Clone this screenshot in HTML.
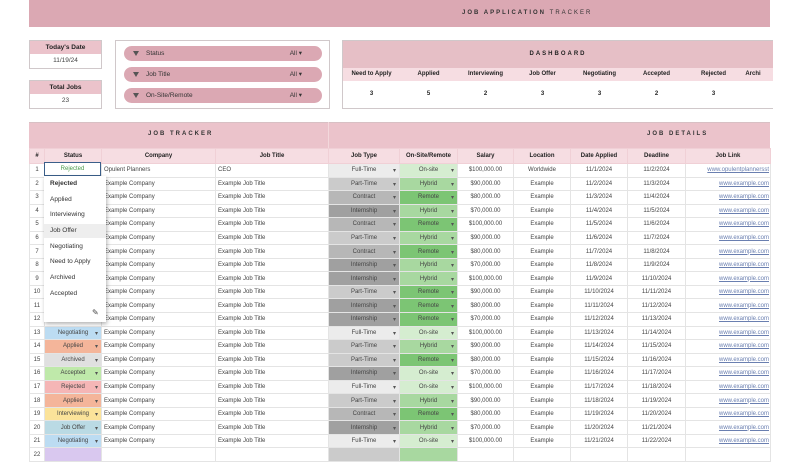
<!DOCTYPE html>
<html><head><style>
body{margin:0;width:800px;height:450px;overflow:hidden;background:#fff;font-family:"Liberation Sans",sans-serif;position:relative}
.a{position:absolute}
.box{border:1px solid #d0c8ca;background:#fff}
.ph{background:#ebc3cb;font-weight:bold;font-size:6.5px;text-align:center;color:#222}
.pill{position:absolute;left:8px;width:198px;height:15px;border-radius:8px;background:#dba8b3;font-size:6.5px;color:#333;line-height:15px}
.pill b{font-weight:normal;position:absolute;left:22px}
.pill i{font-style:normal;position:absolute;right:20px}
.pill s{position:absolute;left:9px;top:5px;width:0;height:0;border-left:3.5px solid transparent;border-right:3.5px solid transparent;border-top:5px solid #555;text-decoration:none}
table{border-collapse:collapse;table-layout:fixed;position:absolute;left:29px;top:148px;font-size:6px;color:#444}
td{height:12.55px;padding:0;border:1px solid #e4e4e4;text-align:center;white-space:nowrap;overflow:hidden;position:relative}
th{height:12px;background:#f6dde2;font-size:6px;color:#222;border:1px solid #f0d0d6}
td.l{text-align:left;padding-left:2px}
.dd::after{content:"▾";position:absolute;right:3px;font-size:6px;color:#555}
.ft{background:#ececec}.pt{background:#cbcbcb}.ct{background:#b7b7b7}.in{background:#a0a0a0}
.os{background:#d5edd0}.hy{background:#a8d8a0}.re{background:#7cc574}
.lk{color:#6a7fb0;text-decoration:underline;text-align:right;padding-right:1px}
</style></head><body>
<div class="a" style="left:29px;top:0;width:741px;height:27px;background:#dba8b3"></div>
<div class="a" style="left:462px;top:10px;font-size:6px;font-weight:bold;letter-spacing:2px;color:#333">JOB APPLICATION <span style="font-weight:normal">TRACKER</span></div>

<div class="a box" style="left:29px;top:40px;width:71px;height:27px"><div class="ph" style="height:13px;line-height:13px">Today's Date</div><div style="font-size:6.5px;text-align:center;line-height:13px;color:#444">11/19/24</div></div>
<div class="a box" style="left:29px;top:80px;width:71px;height:27px"><div class="ph" style="height:13px;line-height:13px">Total Jobs</div><div style="font-size:6.5px;text-align:center;line-height:13px;color:#444">23</div></div>

<div class="a box" style="left:115px;top:40px;width:213px;height:67px">
<div class="pill" style="top:5px"><s></s><b>Status</b><i>All ▾</i></div>
<div class="pill" style="top:26px"><s></s><b>Job Title</b><i>All ▾</i></div>
<div class="pill" style="top:47px"><s></s><b>On-Site/Remote</b><i>All ▾</i></div>
</div>

<div class="a box" style="left:342px;top:40px;width:430px;height:67px;border-right:none">
<div class="ph" style="height:27px;line-height:27px;letter-spacing:2px;font-size:6px;background:#e6bfc6">DASHBOARD</div>
<div style="display:flex;background:#f6dde2;height:13px;line-height:13px;font-size:6px;font-weight:bold;color:#222">
<div style="width:57px;text-align:center">Need to Apply</div><div style="width:57px;text-align:center">Applied</div><div style="width:57px;text-align:center">Interviewing</div><div style="width:57px;text-align:center">Job Offer</div><div style="width:57px;text-align:center">Negotiating</div><div style="width:57px;text-align:center">Accepted</div><div style="width:57px;text-align:center">Rejected</div><div style="width:31px;overflow:hidden">&nbsp;&nbsp;Archi</div></div>
<div style="display:flex;height:26px;line-height:26px;font-size:6px;font-weight:bold;color:#222">
<div style="width:57px;text-align:center">3</div><div style="width:57px;text-align:center">5</div><div style="width:57px;text-align:center">2</div><div style="width:57px;text-align:center">3</div><div style="width:57px;text-align:center">3</div><div style="width:57px;text-align:center">2</div><div style="width:57px;text-align:center">3</div></div>
</div>

<div class="a" style="left:29px;top:122px;width:741px;height:26px;background:#ebc3cb;border-top:1px solid #d8c0c4"></div>
<div class="a" style="left:328px;top:122px;width:1px;height:26px;background:#f3d8dc"></div>
<div class="a" style="left:148px;top:131px;font-size:6px;font-weight:bold;letter-spacing:2px;color:#333">JOB TRACKER</div>
<div class="a" style="left:647px;top:131px;font-size:6px;font-weight:bold;letter-spacing:2px;color:#333">JOB DETAILS</div>

<table>
<colgroup><col style="width:15px"><col style="width:57px"><col style="width:114px"><col style="width:113px"><col style="width:71px"><col style="width:58px"><col style="width:56px"><col style="width:57px"><col style="width:57px"><col style="width:58px"><col style="width:85px"></colgroup>
<tr><th>#</th><th>Status</th><th>Company</th><th>Job Title</th><th>Job Type</th><th>On-Site/Remote</th><th>Salary</th><th>Location</th><th>Date Applied</th><th>Deadline</th><th>Job Link</th></tr>
<tr><td>1</td><td style="color:#4a9a4a">Rejected</td><td class="l">Opulent Planners</td><td class="l">CEO</td><td class="ft dd">Full-Time</td><td class="os dd">On-site</td><td>$100,000.00</td><td>Worldwide</td><td>11/1/2024</td><td>11/2/2024</td><td class="lk">www.opulentplannersst</td></tr>
<tr><td>2</td><td></td><td class="l">Example Company</td><td class="l">Example Job Title</td><td class="pt dd">Part-Time</td><td class="hy dd">Hybrid</td><td>$90,000.00</td><td>Example</td><td>11/2/2024</td><td>11/3/2024</td><td class="lk">www.example.com</td></tr>
<tr><td>3</td><td></td><td class="l">Example Company</td><td class="l">Example Job Title</td><td class="ct dd">Contract</td><td class="re dd">Remote</td><td>$80,000.00</td><td>Example</td><td>11/3/2024</td><td>11/4/2024</td><td class="lk">www.example.com</td></tr>
<tr><td>4</td><td></td><td class="l">Example Company</td><td class="l">Example Job Title</td><td class="in dd">Internship</td><td class="hy dd">Hybrid</td><td>$70,000.00</td><td>Example</td><td>11/4/2024</td><td>11/5/2024</td><td class="lk">www.example.com</td></tr>
<tr><td>5</td><td></td><td class="l">Example Company</td><td class="l">Example Job Title</td><td class="ct dd">Contract</td><td class="re dd">Remote</td><td>$100,000.00</td><td>Example</td><td>11/5/2024</td><td>11/6/2024</td><td class="lk">www.example.com</td></tr>
<tr><td>6</td><td></td><td class="l">Example Company</td><td class="l">Example Job Title</td><td class="pt dd">Part-Time</td><td class="hy dd">Hybrid</td><td>$90,000.00</td><td>Example</td><td>11/6/2024</td><td>11/7/2024</td><td class="lk">www.example.com</td></tr>
<tr><td>7</td><td></td><td class="l">Example Company</td><td class="l">Example Job Title</td><td class="ct dd">Contract</td><td class="re dd">Remote</td><td>$80,000.00</td><td>Example</td><td>11/7/2024</td><td>11/8/2024</td><td class="lk">www.example.com</td></tr>
<tr><td>8</td><td></td><td class="l">Example Company</td><td class="l">Example Job Title</td><td class="in dd">Internship</td><td class="hy dd">Hybrid</td><td>$70,000.00</td><td>Example</td><td>11/8/2024</td><td>11/9/2024</td><td class="lk">www.example.com</td></tr>
<tr><td>9</td><td></td><td class="l">Example Company</td><td class="l">Example Job Title</td><td class="in dd">Internship</td><td class="hy dd">Hybrid</td><td>$100,000.00</td><td>Example</td><td>11/9/2024</td><td>11/10/2024</td><td class="lk">www.example.com</td></tr>
<tr><td>10</td><td></td><td class="l">Example Company</td><td class="l">Example Job Title</td><td class="pt dd">Part-Time</td><td class="re dd">Remote</td><td>$90,000.00</td><td>Example</td><td>11/10/2024</td><td>11/11/2024</td><td class="lk">www.example.com</td></tr>
<tr><td>11</td><td></td><td class="l">Example Company</td><td class="l">Example Job Title</td><td class="in dd">Internship</td><td class="re dd">Remote</td><td>$80,000.00</td><td>Example</td><td>11/11/2024</td><td>11/12/2024</td><td class="lk">www.example.com</td></tr>
<tr><td>12</td><td></td><td class="l">Example Company</td><td class="l">Example Job Title</td><td class="in dd">Internship</td><td class="re dd">Remote</td><td>$70,000.00</td><td>Example</td><td>11/12/2024</td><td>11/13/2024</td><td class="lk">www.example.com</td></tr>
<tr><td>13</td><td class="dd" style="background:#bcdcf2">Negotiating</td><td class="l">Example Company</td><td class="l">Example Job Title</td><td class="ft dd">Full-Time</td><td class="os dd">On-site</td><td>$100,000.00</td><td>Example</td><td>11/13/2024</td><td>11/14/2024</td><td class="lk">www.example.com</td></tr>
<tr><td>14</td><td class="dd" style="background:#f4b59a">Applied</td><td class="l">Example Company</td><td class="l">Example Job Title</td><td class="pt dd">Part-Time</td><td class="hy dd">Hybrid</td><td>$90,000.00</td><td>Example</td><td>11/14/2024</td><td>11/15/2024</td><td class="lk">www.example.com</td></tr>
<tr><td>15</td><td class="dd" style="background:#e0e0e0">Archived</td><td class="l">Example Company</td><td class="l">Example Job Title</td><td class="pt dd">Part-Time</td><td class="re dd">Remote</td><td>$80,000.00</td><td>Example</td><td>11/15/2024</td><td>11/16/2024</td><td class="lk">www.example.com</td></tr>
<tr><td>16</td><td class="dd" style="background:#bfe9aa">Accepted</td><td class="l">Example Company</td><td class="l">Example Job Title</td><td class="in dd">Internship</td><td class="os dd">On-site</td><td>$70,000.00</td><td>Example</td><td>11/16/2024</td><td>11/17/2024</td><td class="lk">www.example.com</td></tr>
<tr><td>17</td><td class="dd" style="background:#f5b6b6">Rejected</td><td class="l">Example Company</td><td class="l">Example Job Title</td><td class="ft dd">Full-Time</td><td class="os dd">On-site</td><td>$100,000.00</td><td>Example</td><td>11/17/2024</td><td>11/18/2024</td><td class="lk">www.example.com</td></tr>
<tr><td>18</td><td class="dd" style="background:#f4b59a">Applied</td><td class="l">Example Company</td><td class="l">Example Job Title</td><td class="pt dd">Part-Time</td><td class="hy dd">Hybrid</td><td>$90,000.00</td><td>Example</td><td>11/18/2024</td><td>11/19/2024</td><td class="lk">www.example.com</td></tr>
<tr><td>19</td><td class="dd" style="background:#fbe39a">Interviewing</td><td class="l">Example Company</td><td class="l">Example Job Title</td><td class="ct dd">Contract</td><td class="re dd">Remote</td><td>$80,000.00</td><td>Example</td><td>11/19/2024</td><td>11/20/2024</td><td class="lk">www.example.com</td></tr>
<tr><td>20</td><td class="dd" style="background:#badae4">Job Offer</td><td class="l">Example Company</td><td class="l">Example Job Title</td><td class="in dd">Internship</td><td class="hy dd">Hybrid</td><td>$70,000.00</td><td>Example</td><td>11/20/2024</td><td>11/21/2024</td><td class="lk">www.example.com</td></tr>
<tr><td>21</td><td class="dd" style="background:#bcdcf2">Negotiating</td><td class="l">Example Company</td><td class="l">Example Job Title</td><td class="ft dd">Full-Time</td><td class="os dd">On-site</td><td>$100,000.00</td><td>Example</td><td>11/21/2024</td><td>11/22/2024</td><td class="lk">www.example.com</td></tr>
<tr><td>22</td><td style="background:#d9c8ef"></td><td></td><td></td><td class="pt"></td><td class="hy"></td><td></td><td></td><td></td><td></td><td></td></tr>
</table>

<div class="a" style="left:44px;top:162px;width:55px;height:12px;border:1.5px solid #3b5f8a;font-size:6px;text-align:center;line-height:12px;color:#4a9a4a;background:#fff">Rejected</div>
<div class="a" style="left:44px;top:176px;width:62px;height:146px;background:#fff;box-shadow:1px 2px 4px rgba(0,0,0,.3);font-size:6.5px;color:#333">
<div style="position:absolute;left:6px;top:4px;font-weight:bold">Rejected</div>
<div style="position:absolute;left:6px;top:20px">Applied</div>
<div style="position:absolute;left:6px;top:35px">Interviewing</div>
<div style="position:absolute;left:0;top:48px;width:62px;height:14px;background:#eee"></div>
<div style="position:absolute;left:6px;top:51px">Job Offer</div>
<div style="position:absolute;left:6px;top:67px">Negotiating</div>
<div style="position:absolute;left:6px;top:82px">Need to Apply</div>
<div style="position:absolute;left:6px;top:98px">Archived</div>
<div style="position:absolute;left:6px;top:114px">Accepted</div>
<div style="position:absolute;left:48px;top:132px;font-size:8px;color:#444">✎</div>
</div>
</body></html>
